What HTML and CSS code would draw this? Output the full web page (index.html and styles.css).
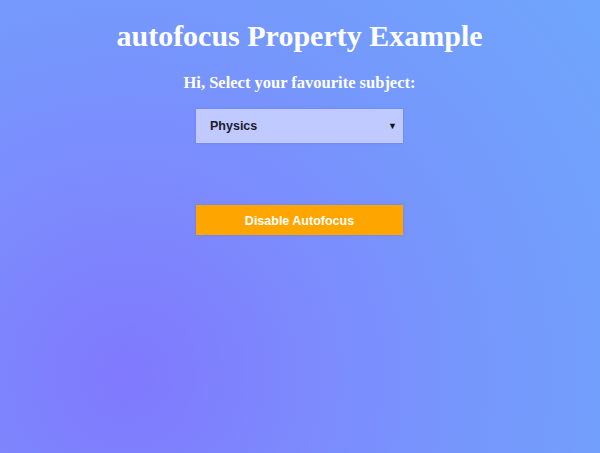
FILE: index.html
```html
<!DOCTYPE html>
<html>
<head>
<meta charset="utf-8">
<title>autofocus Property Example</title>
<link rel="stylesheet" href="styles.css">
</head>
<body>
<main class="page">
  <h1 class="title">autofocus Property Example</h1>
  <h3 class="subtitle">Hi, Select your favourite subject:</h3>
  <div class="select-box">
    <span class="select-value">Physics</span>
    <span class="select-arrow">▼</span>
  </div>
  <button class="btn">Disable Autofocus</button>
</main>
</body>
</html>
```
FILE: styles.css
```css
html, body {
  margin: 0;
  padding: 0;
  height: 100%;
}
body {
  background: radial-gradient(circle at 21% 83%, #8079fd 0%, #7c8cfd 35%, #7598fc 60%, #6fa6fc 100%);
  font-family: "Liberation Serif", "Times New Roman", serif;
  color: #ffffff;
}
.page {
  display: flex;
  flex-direction: column;
  align-items: center;
  padding-top: 18px;
  padding-right: 1px;
}
.title {
  font-size: 30px;
  font-weight: bold;
  line-height: 36px;
  margin: 0;
}
.subtitle {
  font-size: 16.5px;
  font-weight: bold;
  line-height: 20px;
  margin: 19px 0 0;
}
.select-box {
  box-sizing: border-box;
  width: 207px;
  height: 34px;
  margin-top: 16px;
  background: #c0caff;
  box-shadow: 0 0 2px rgba(90, 110, 200, 0.5);
  display: flex;
  align-items: center;
  justify-content: space-between;
  padding: 0 6px 0 14px;
  font-family: "Liberation Sans", Arial, sans-serif;
  font-size: 12.5px;
  font-weight: bold;
  color: #1b1b2b;
}
.select-arrow {
  font-size: 9px;
  color: #111122;
}
.btn {
  box-sizing: border-box;
  width: 207px;
  height: 30px;
  margin-top: 62px;
  border: none;
  background: #ffa500;
  box-shadow: 0 0 2px rgba(90, 110, 200, 0.5);
  color: #ffffff;
  font-family: "Liberation Sans", Arial, sans-serif;
  font-size: 12.5px;
  font-weight: bold;
  padding: 1px 0 0;
}
```
